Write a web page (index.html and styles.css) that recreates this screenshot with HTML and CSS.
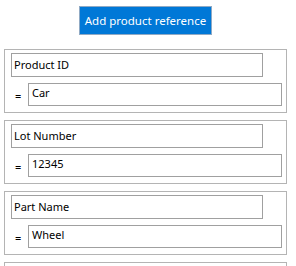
FILE: index.html
```html
<!DOCTYPE html>
<html lang="en">
<head>
    <meta charset="UTF-8">
    <title>Product references</title>
    <link rel="stylesheet" href="styles.css">
</head>
<body>

<div class="page">
    <div class="toolbar">
        <button class="add-btn">Add product reference</button>
    </div>

    <div class="ref-list">
        <div class="ref-group">
            <div class="field-name">Product ID</div>
            <div class="value-row">
                <span class="equals">=</span>
                <div class="field-value">Car</div>
            </div>
        </div>

        <div class="ref-group">
            <div class="field-name">Lot Number</div>
            <div class="value-row">
                <span class="equals">=</span>
                <div class="field-value">12345</div>
            </div>
        </div>

        <div class="ref-group">
            <div class="field-name">Part Name</div>
            <div class="value-row">
                <span class="equals">=</span>
                <div class="field-value">Wheel</div>
            </div>
        </div>

        <!-- next group, scrolled below the fold -->
        <div class="ref-group"></div>
    </div>
</div>

</body>
</html>
```

FILE: styles.css
```css
/* Reset */
* {
    margin: 0;
    padding: 0;
    box-sizing: border-box;
}

body {
    font-family: 'Noto Sans', 'Open Sans', sans-serif;
    font-size: 11px;
    color: #000;
    background: #fff;
    overflow: hidden;
}

.page {
    width: 291px;
}

/* Toolbar */
.toolbar {
    display: flex;
    justify-content: center;
    padding-top: 6px;
}

.add-btn {
    width: 133px;
    height: 29px;
    background: #0078d7;
    color: #fff;
    border: 1px solid #8fa9c4;
    font-family: inherit;
    font-size: 11.5px;
}

/* Reference groups */
.ref-list {
    display: flex;
    flex-direction: column;
    gap: 7px;
    padding: 14px 4px 0 4px;
}

.ref-group {
    border: 1px solid #b4b4b4;
    padding: 3px 4px 6px 6px;
    height: 64px;
    flex-shrink: 0;
}

.field-name {
    width: 252px;
    height: 24px;
    border: 1px solid #a0a0a0;
    padding: 2px 0 0 2px;
    line-height: 18px;
}

.value-row {
    display: flex;
    align-items: center;
    margin-top: 6px;
}

.equals {
    width: 17px;
    padding-left: 4px;
    padding-top: 2px;
}

.field-value {
    flex: 1;
    height: 23px;
    border: 1px solid #a0a0a0;
    padding: 0 0 0 3px;
    line-height: 18px;
}
```
